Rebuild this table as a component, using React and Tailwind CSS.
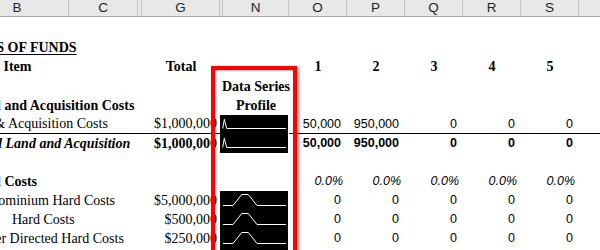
import React from "react";

const SERIF = "font-['Liberation_Serif','Times_New_Roman',serif]";
const SANS = "font-['Liberation_Sans',Arial,sans-serif]";

function Spike() {
  return (
    <svg width="68" height="19" className="block">
      <polyline
        points="2.7,13.5 4.3,4.3 6.7,13.5 66,13.5"
        fill="none"
        stroke="#ffffff"
        strokeWidth="1"
      />
    </svg>
  );
}

function Trap() {
  return (
    <svg width="68" height="19" className="block">
      <polyline
        points="3,14.5 13,14.5 21.7,3.5 28.3,3.5 37,14.5 66,14.5"
        fill="none"
        stroke="#ffffff"
        strokeWidth="1"
      />
    </svg>
  );
}

function Black({ children }) {
  return <div className="-ml-[3px] w-[68px] h-full bg-black">{children}</div>;
}

// Column cells
const cB = "w-[103px] -ml-[34px] shrink-0 flex items-center whitespace-nowrap";
const cBc = "w-[103px] -ml-[34px] shrink-0 flex items-center justify-center whitespace-nowrap";
const cC = "w-[69px] shrink-0";
const cG1 = "w-[4px] shrink-0";
const cG = "w-[78px] shrink-0 flex items-center justify-end whitespace-nowrap";
const cGc = "w-[78px] shrink-0 flex items-center justify-center whitespace-nowrap";
const cG2 = "w-[3px] shrink-0";
const cN = "w-[66px] shrink-0 flex items-center justify-center whitespace-nowrap";
const cNs = "w-[66px] shrink-0 flex items-center justify-start";
const cO = "w-[58px] shrink-0 flex items-center justify-end whitespace-nowrap";
const cOc = "w-[58px] shrink-0 flex items-center justify-center whitespace-nowrap";
const cT = "flex-1";

function Nums({ vals, cls = "", line = "" }) {
  return vals.map((v, i) => (
    <div key={i} className={`${cO} ${line} pr-[6px] ${SANS} text-[12.5px] ${cls}`}>
      {v}
    </div>
  ));
}

function HeaderCell({ w, label }) {
  return (
    <div
      className={`${w} shrink-0 h-full border-r border-[#c4c4c4] flex items-center justify-center text-[13.5px] text-[#1f1f1f] ${SANS}`}
    >
      {label}
    </div>
  );
}

export default function App() {
  return (
    <div className="relative w-[600px] h-[250px] overflow-hidden bg-white text-black">
      {/* Column header */}
      <div className="flex h-[17px] bg-[#e8e8e8] border-b border-[#a6a6a6]">
        <HeaderCell w="w-[103px] -ml-[34px]" label="B" />
        <HeaderCell w="w-[69px]" label="C" />
        <HeaderCell w="w-[4px]" label="" />
        <HeaderCell w="w-[78px]" label="G" />
        <HeaderCell w="w-[3px]" label="" />
        <HeaderCell w="w-[66px]" label="N" />
        <HeaderCell w="w-[58px]" label="O" />
        <HeaderCell w="w-[58px]" label="P" />
        <HeaderCell w="w-[58px]" label="Q" />
        <HeaderCell w="w-[58px]" label="R" />
        <HeaderCell w="w-[58px]" label="S" />
        <div className="flex-1" />
      </div>

      <div className={`${SERIF} text-[14px] leading-none`}>
        {/* r0 */}
        <div className="h-[21px]" />

        {/* r1 */}
        <div className="flex h-[19px]">
          <div className={`${cB} pl-[3px] font-bold underline underline-offset-[2px]`}>
            USES OF FUNDS
          </div>
        </div>

        {/* r2 */}
        <div className="flex h-[20px] font-bold">
          <div className={cBc}>Item</div>
          <div className={cC} />
          <div className={cG1} />
          <div className={cGc}>Total</div>
          <div className={cG2} />
          <div className={cN} />
          {["1", "2", "3", "4", "5"].map((v) => (
            <div key={v} className={cOc}>
              {v}
            </div>
          ))}
        </div>

        {/* r3 */}
        <div className="flex h-[19px] font-bold">
          <div className={cB} />
          <div className={cC} />
          <div className={cG1} />
          <div className={cG} />
          <div className={cG2} />
          <div className={cN}>Data Series</div>
        </div>

        {/* r4 */}
        <div className="flex h-[19px] font-bold">
          <div className={`${cB} pl-[3px]`}>Land and Acquisition Costs</div>
          <div className={cC} />
          <div className={cG1} />
          <div className={cG} />
          <div className={cG2} />
          <div className={cN}>Profile</div>
        </div>

        {/* r5 */}
        <div className="flex h-[19px]">
          <div className={`${cB} border-b border-black`}>
            <span className="-ml-[4px]">Land &amp; Acquisition Costs</span>
          </div>
          <div className={`${cC} border-b border-black`} />
          <div className={`${cG1} border-b border-black`} />
          <div className={`${cG} pr-[3px] border-b border-black`}>$1,000,000</div>
          <div className={`${cG2} border-b border-black`} />
          <div className={cNs}>
            <Black>
              <Spike />
            </Black>
          </div>
          <Nums vals={["50,000", "950,000", "0", "0", "0"]} line="border-b border-black" />
          <div className={`${cT} border-b border-black`} />
        </div>

        {/* r6 */}
        <div className="flex h-[19px] font-bold">
          <div className={`${cB} pl-[7px] italic`}>Total Land and Acquisition</div>
          <div className={cC} />
          <div className={cG1} />
          <div className={`${cG} pr-[3px]`}>$1,000,000</div>
          <div className={cG2} />
          <div className={cNs}>
            <Black>
              <Spike />
            </Black>
          </div>
          <Nums vals={["50,000", "950,000", "0", "0", "0"]} cls="font-bold" />
        </div>

        {/* r7 */}
        <div className="h-[19px]" />

        {/* r8 */}
        <div className="flex h-[19px]">
          <div className={`${cB} pl-[3px] font-bold`}>Hard Costs</div>
          <div className={cC} />
          <div className={cG1} />
          <div className={cG} />
          <div className={cG2} />
          <div className={cN} />
          {["0.0%", "0.0%", "0.0%", "0.0%", "0.0%"].map((v, i) => (
            <div key={i} className={`${cO} pr-[4px] ${SANS} text-[12.5px] italic`}>
              {v}
            </div>
          ))}
        </div>

        {/* r9 */}
        <div className="flex h-[19px]">
          <div className={`${cB} pl-[2px]`}>Condominium Hard Costs</div>
          <div className={cC} />
          <div className={cG1} />
          <div className={`${cG} pr-[3px]`}>$5,000,000</div>
          <div className={cG2} />
          <div className={cNs}>
            <Black>
              <Trap />
            </Black>
          </div>
          <Nums vals={["0", "0", "0", "0", "0"]} />
        </div>

        {/* r10 */}
        <div className="flex h-[19px]">
          <div className={`${cB} pl-[46px]`}>Hard Costs</div>
          <div className={cC} />
          <div className={cG1} />
          <div className={`${cG} pr-[3px]`}>$500,000</div>
          <div className={cG2} />
          <div className={cNs}>
            <Black>
              <Trap />
            </Black>
          </div>
          <Nums vals={["0", "0", "0", "0", "0"]} />
        </div>

        {/* r11 */}
        <div className="flex h-[19px]">
          <div className={`${cB} pl-[2px]`}>Owner Directed Hard Costs</div>
          <div className={cC} />
          <div className={cG1} />
          <div className={`${cG} pr-[3px]`}>$250,000</div>
          <div className={cG2} />
          <div className={cNs}>
            <Black>
              <Trap />
            </Black>
          </div>
          <Nums vals={["0", "0", "0", "0", "0"]} />
        </div>

        {/* r12 */}
        <div className="flex h-[19px]">
          <div className={cB} />
          <div className={cC} />
          <div className={cG1} />
          <div className={cG} />
          <div className={cG2} />
          <div className={cNs}>
            <Black>
              <Trap />
            </Black>
          </div>
        </div>
      </div>

      {/* Red highlight frame over column N */}
      <div className="absolute left-[211px] top-[66px] w-[86px] h-[220px] border-[4px] border-[#ff0000] shadow-[2px_2px_3px_rgba(0,0,0,0.45),inset_1px_1px_2px_rgba(0,0,0,0.35)]" />
    </div>
  );
}
